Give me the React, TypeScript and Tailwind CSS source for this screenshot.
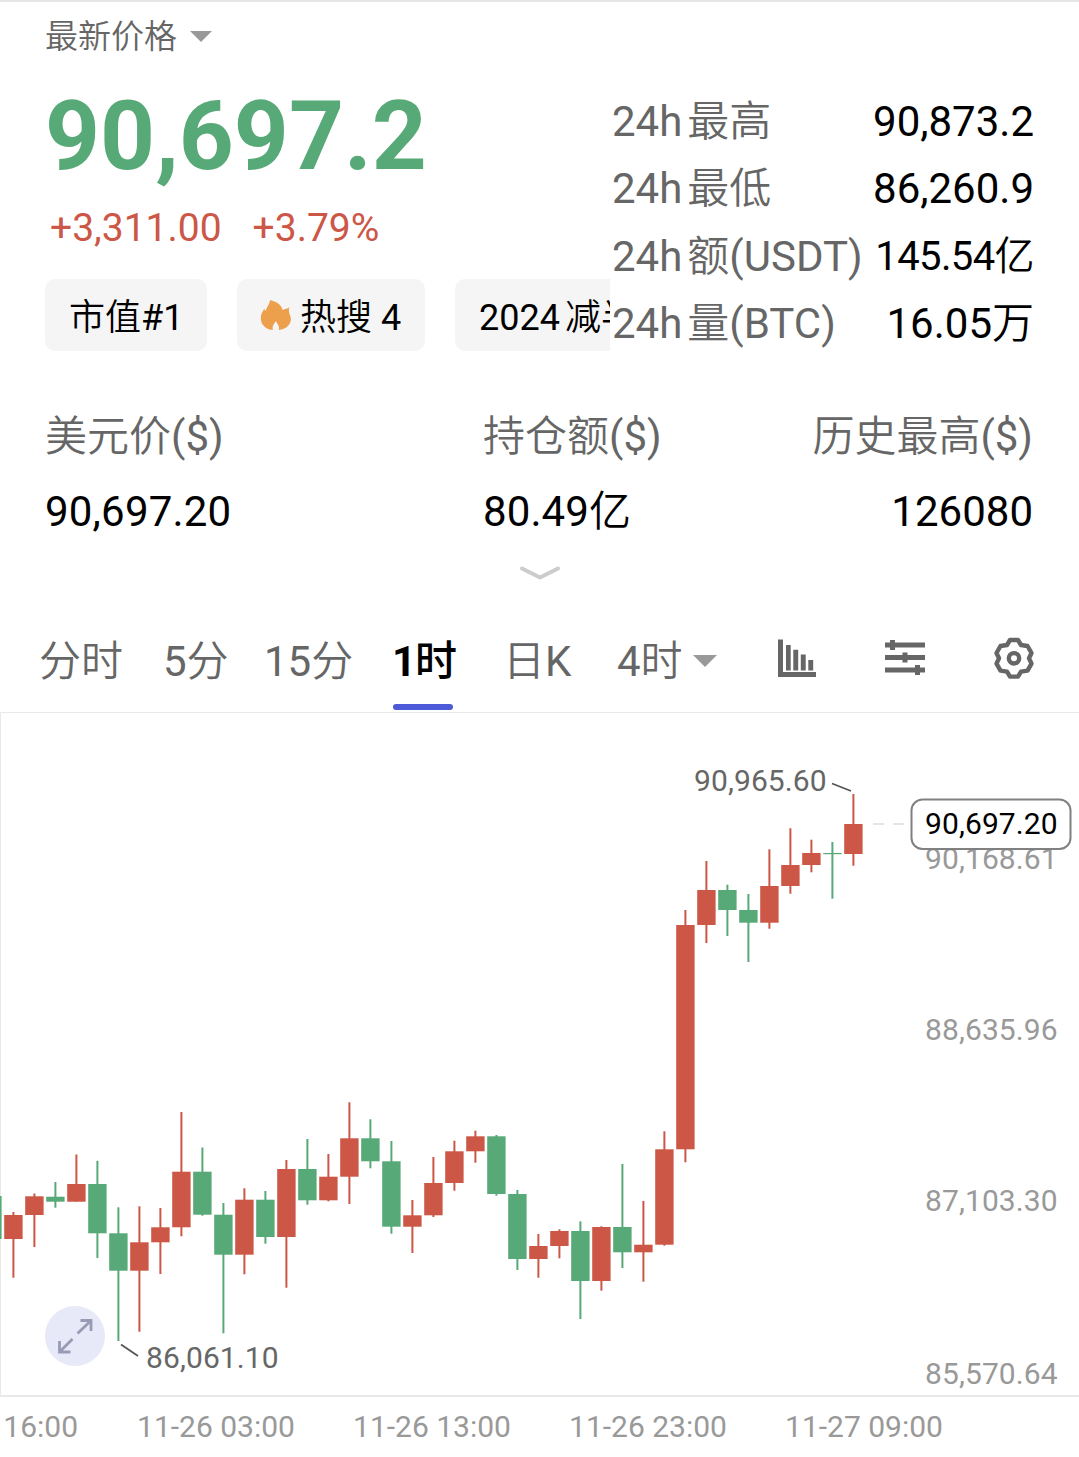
type Candle = [up: number, high: number, top: number, bottom: number, low: number];

const RED = "#cc5747";
const GREEN = "#58a978";

// [up, high, top, bottom, low] in chart pixels, one entry per hour
const candles: Candle[] = [
  [0, 1196, 1196, 1239, 1239],
  [1, 1212, 1215, 1239, 1277.7],
  [1, 1193.5, 1196.3, 1215, 1247],
  [0, 1182, 1196.7, 1201.7, 1207.7],
  [1, 1154.5, 1184, 1201.7, 1201.7],
  [0, 1160.8, 1184, 1233.3, 1258],
  [0, 1207.3, 1233.3, 1270.7, 1341],
  [1, 1206.3, 1242.3, 1270.7, 1331.7],
  [1, 1208, 1227.3, 1242.3, 1274],
  [1, 1112, 1171.7, 1227.3, 1236.3],
  [0, 1147.5, 1171.7, 1214.7, 1215.7],
  [0, 1203, 1214.7, 1254.7, 1333.3],
  [1, 1188.3, 1199.7, 1254.7, 1274.3],
  [0, 1191, 1199.7, 1237, 1243.7],
  [1, 1160, 1169, 1237, 1287.7],
  [0, 1139, 1169, 1200.3, 1204.7],
  [1, 1154, 1176.7, 1200.3, 1201.3],
  [1, 1102.3, 1138.3, 1176.7, 1204],
  [0, 1119.3, 1138.3, 1161.3, 1168.3],
  [0, 1141, 1161.3, 1226.7, 1233.7],
  [1, 1200, 1215.3, 1226.7, 1253],
  [1, 1157, 1183, 1215.3, 1217],
  [1, 1140.7, 1151.3, 1183, 1190.7],
  [1, 1130.7, 1136.3, 1151.3, 1162.7],
  [0, 1135, 1136.3, 1194, 1195.7],
  [0, 1190, 1194, 1259, 1270],
  [1, 1234, 1246, 1259, 1277.7],
  [1, 1229.3, 1231, 1246, 1258.3],
  [0, 1221.3, 1231, 1281, 1319],
  [1, 1226.3, 1227, 1281, 1290.7],
  [0, 1164, 1227, 1252.3, 1268],
  [1, 1201, 1244.7, 1252.3, 1281.7],
  [1, 1131.3, 1149.3, 1244.7, 1245.7],
  [1, 910, 925, 1149.3, 1162.3],
  [1, 861, 890, 925, 943],
  [0, 884.7, 890, 910, 936],
  [0, 894, 910, 922.7, 962],
  [1, 849.3, 886, 922.7, 928.7],
  [1, 828.3, 865, 886, 893.7],
  [1, 839.7, 853, 865, 872.3],
  [0, 842, 853, 854.2, 898.7],
  [1, 794, 824, 854, 865.7],
];

const dayStats = [
  { label: "最高", value: "90,873.2", size: "" },
  { label: "最低", value: "86,260.9", size: "" },
  { label: "额(USDT)", value: "145.54亿", size: "text-[40px] tracking-[-0.6px]" },
  { label: "量(BTC)", value: "16.05万", size: "" },
];

const axisPrices = [
  { y: 858, text: "90,168.61" },
  { y: 1029, text: "88,635.96" },
  { y: 1200, text: "87,103.30" },
  { y: 1373, text: "85,570.64" },
];

const axisTimes = ["11-26 03:00", "11-26 13:00", "11-26 23:00", "11-27 09:00"];

function Caret({ className }: { className: string }) {
  return (
    <svg className={className} viewBox="0 0 24 12" preserveAspectRatio="none">
      <path d="M0 0H24L12 12Z" fill="#999" />
    </svg>
  );
}

function Flame() {
  return (
    <svg className="h-[32px] w-[32px]" viewBox="0 0 32 32">
      <path
        d="M10 1C9.5 6 6.500 8 6 11.500C5 11.500 4.500 10.700 4.300 9.700C2 13 .5 16 .8 20C1.300 26 6 30.500 13 31C11.800 27 14 25 15.800 22.200C17.600 25 19.800 27 18.800 31C26 30 30.800 26 30.900 20C31 16 28 14.500 29.200 8.200C27.500 9.800 25 9.600 22.500 11C21.500 5.500 16 2.500 10 1Z"
        fill="#eda04c"
      />
    </svg>
  );
}

function Header() {
  return (
    <section className="flex h-[351px] border-t-2 border-[#e5e5e5]">
      <div className="flex w-[610px] flex-col overflow-hidden pl-[45px]">
        <div className="flex h-[68px] text-[33px] leading-[70px] text-[#666]">
          <span>最新价格</span>
          <Caret className="ml-[13px] mt-[29px] h-[11px] w-[22px]" />
        </div>
        <div className="h-[134px] text-[96px] leading-[132px] font-bold text-[#58a978]">90,697.2</div>
        <div className="flex h-[48px] gap-[31px] pl-[5px] text-[39px] leading-[48px] text-[#cc5747]">
          <span>+3,311.00</span>
          <span>+3.79%</span>
        </div>
        <div className="mt-[27px] flex h-[72px] gap-[30px] text-[36px] leading-[78px] whitespace-nowrap">
          <div className="w-[162px] shrink-0 rounded-[10px] bg-[#f5f5f5] pl-[24px]">市值#1</div>
          <div className="flex w-[188px] shrink-0 rounded-[10px] bg-[#f5f5f5] pt-[20px] pl-[23px]">
            <Flame />
            <span className="ml-[8px] leading-[38px]">热搜 4</span>
          </div>
          <div className="w-[240px] shrink-0 rounded-[10px] bg-[#f5f5f5] pl-[24px]">
            2024<span className="ml-[5px]">减半</span>
          </div>
        </div>
      </div>
      <div className="flex w-[424px] flex-col pt-[86px] pl-[2px] text-[42px] leading-[67.4px] whitespace-nowrap">
        {dayStats.map((s) => (
          <div key={s.label} className="flex h-[67.4px] justify-between">
            <span className="text-[#666]">
              24h<span className="ml-[5px]">{s.label}</span>
            </span>
            <span className={s.size}>{s.value}</span>
          </div>
        ))}
      </div>
    </section>
  );
}

function Summary() {
  return (
    <section className="pt-[48px]">
      <div className="flex h-[150px] pr-[46px] pl-[45px] text-[42px] leading-[75px]">
        <div className="w-[438px]">
          <div className="text-[#666]">美元价($)</div>
          <div className="tracking-[0.2px]">90,697.20</div>
        </div>
        <div className="flex-1">
          <div className="text-[#666]">持仓额($)</div>
          <div className="tracking-[0.1px]">80.49亿</div>
        </div>
        <div className="text-right">
          <div className="text-[#666]">历史最高($)</div>
          <div>126080</div>
        </div>
      </div>
      <svg className="mx-auto mt-[14px] h-[20px] w-[44px]" viewBox="0 0 44 20">
        <path d="M4 5.500 22 14.500 40 5.500" fill="none" stroke="#ccc" strokeWidth="4" strokeLinecap="round" strokeLinejoin="round" />
      </svg>
    </section>
  );
}

function Tabs() {
  return (
    <nav className="mt-[29px] flex h-[100px] items-start pl-[39px] text-[42px] leading-[100px] whitespace-nowrap text-[#666]">
      <span className="w-[124px]">分时</span>
      <span className="w-[101px]">5分</span>
      <span className="w-[128px]">15分</span>
      <span className="relative w-[111px] font-bold tracking-[-1px] text-black">
        1<span className="font-['Noto_Sans_CJK_SC_Medium','Noto_Sans_CJK_SC',sans-serif] leading-none font-medium">时</span>
        <span className="absolute bottom-[2px] left-[1px] h-[6px] w-[60px] rounded-full bg-[#4d5bd8]" />
      </span>
      <span className="w-[114px]">日K</span>
      <span className="flex w-[161px]">
        4时
        <Caret className="mt-[43px] ml-[10px] h-[12px] w-[24px]" />
      </span>
      <svg className="mt-[26px] h-[42px] w-[40px]" viewBox="0 0 40 42" fill="#666">
        <path d="M0 1.500H5V34H38V39H0ZM8 7H12.700V32.500H8ZM15.300 11.700H20.200V32.500H15.300ZM22.800 16.500H27.700V32.500H22.800ZM30.300 22H35.200V32.500H30.300Z" />
      </svg>
      <svg className="mt-[26px] ml-[67px] h-[42px] w-[40px]" viewBox="0 0 40 42" fill="#666">
        <path d="M0 4.500H40V9.500H0ZM0 17H40V22H0ZM0 29.500H40V34.500H0ZM5 2H10V12H5ZM17.500 14.500H22.500V24.500H17.500ZM30 27H35V37H30Z" />
      </svg>
      <svg className="mt-[16px] ml-[59px] h-[60px] w-[60px]" viewBox="0 0 60 60" fill="none" stroke="#666" strokeWidth="4.400" strokeLinejoin="round">
        <path d="M26 12h8l3 5 6.500 1 4 7-2.500 5.300 2.500 5.300-4 7-6.500 1-3 5h-8l-3-5-6.500-1-4-7 2.500-5.300-2.500-5.300 4-7 6.500-1z" />
        <circle cx="30" cy="30.300" r="5.200" />
      </svg>
    </nav>
  );
}

function Chart() {
  return (
    <svg className="block h-[685px] w-[1079px] font-[Roboto] tracking-[0.1px]" viewBox="0 712 1079 685" fontSize="30">
      <path d="M1079 712.500H.5V1396" fill="none" stroke="#e9e9e9" />
      <path d="M0 1396H1079" stroke="#e9e9e9" strokeWidth="2" />

      {candles.map(([up, high, top, bottom, low], i) => {
        const x = 13.4 + (i - 1) * 21;
        return (
          <g key={i} fill={up ? RED : GREEN}>
            <rect x={x - 1} y={high} width="2" height={low - high} />
            <rect x={x - 9.2} y={top} width="18.4" height={bottom - top} />
          </g>
        );
      })}

      <path d="M873 824H884M893 824H904" stroke="#ddd" strokeWidth="1.500" />
      <path d="M832 783.500 851 791M121 1344.500 138 1356" stroke="#555" strokeWidth="1.800" />
      <text x="694" y="791" fill="#666">90,965.60</text>
      <text x="146" y="1368" fill="#666">86,061.10</text>

      <g fill="#999">
        {axisPrices.map((p) => (
          <text key={p.text} x="925" y={p.y + 10.500}>{p.text}</text>
        ))}
      </g>
      <rect x="911.500" y="799.500" width="159" height="49.500" rx="11" fill="#fff" stroke="#808080" strokeWidth="2" />
      <text x="925" y="834" fill="#000">90,697.20</text>

      <circle cx="75" cy="1336" r="30" fill="#e8e9f8" />
      <path d="M77.500 1333.500 91 1320.500M80.500 1320.500H91V1331M72.500 1339 59.500 1352M59.500 1341V1352H70.500" fill="none" stroke="#999ab5" strokeWidth="2.800" />
    </svg>
  );
}

function TimeAxis() {
  return (
    <div className="flex h-[60px] text-[30px] leading-[60px] whitespace-nowrap text-[#999]">
      <span className="w-[108px] pr-[30px] text-right">16:00</span>
      {axisTimes.map((t) => (
        <span key={t} className="w-[216px] shrink-0 text-center">{t}</span>
      ))}
    </div>
  );
}

export default function App() {
  return (
    <main className="h-[1457px] w-[1079px] overflow-hidden bg-white font-[Roboto,'Noto_Sans_CJK_SC_DemiLight','Noto_Sans_CJK_SC',sans-serif] text-black">
      <Header />
      <Summary />
      <Tabs />
      <Chart />
      <TimeAxis />
    </main>
  );
}
